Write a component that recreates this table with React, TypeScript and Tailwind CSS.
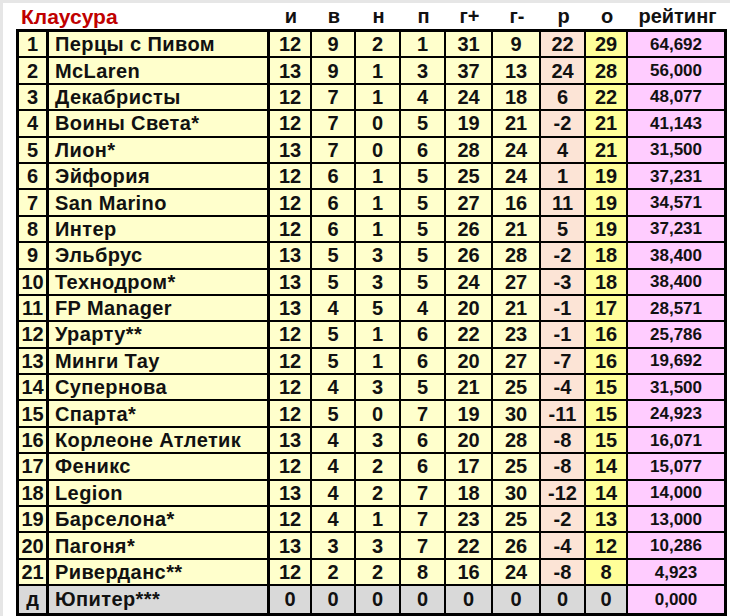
type Row = [string, string, number, number, number, number, number, number, number, number, string]

const rows: Row[] = [
  ["1", "Перцы с Пивом", 12, 9, 2, 1, 31, 9, 22, 29, "64,692"],
  ["2", "McLaren", 13, 9, 1, 3, 37, 13, 24, 28, "56,000"],
  ["3", "Декабристы", 12, 7, 1, 4, 24, 18, 6, 22, "48,077"],
  ["4", "Воины Света*", 12, 7, 0, 5, 19, 21, -2, 21, "41,143"],
  ["5", "Лион*", 13, 7, 0, 6, 28, 24, 4, 21, "31,500"],
  ["6", "Эйфория", 12, 6, 1, 5, 25, 24, 1, 19, "37,231"],
  ["7", "San Marino", 12, 6, 1, 5, 27, 16, 11, 19, "34,571"],
  ["8", "Интер", 12, 6, 1, 5, 26, 21, 5, 19, "37,231"],
  ["9", "Эльбрус", 13, 5, 3, 5, 26, 28, -2, 18, "38,400"],
  ["10", "Технодром*", 13, 5, 3, 5, 24, 27, -3, 18, "38,400"],
  ["11", "FP Manager", 13, 4, 5, 4, 20, 21, -1, 17, "28,571"],
  ["12", "Урарту**", 12, 5, 1, 6, 22, 23, -1, 16, "25,786"],
  ["13", "Минги Тау", 12, 5, 1, 6, 20, 27, -7, 16, "19,692"],
  ["14", "Супернова", 12, 4, 3, 5, 21, 25, -4, 15, "31,500"],
  ["15", "Спарта*", 12, 5, 0, 7, 19, 30, -11, 15, "24,923"],
  ["16", "Корлеоне Атлетик", 13, 4, 3, 6, 20, 28, -8, 15, "16,071"],
  ["17", "Феникс", 12, 4, 2, 6, 17, 25, -8, 14, "15,077"],
  ["18", "Legion", 13, 4, 2, 7, 18, 30, -12, 14, "14,000"],
  ["19", "Барселона*", 12, 4, 1, 7, 23, 25, -2, 13, "13,000"],
  ["20", "Пагоня*", 13, 3, 3, 7, 22, 26, -4, 12, "10,286"],
  ["21", "Риверданс**", 12, 2, 2, 8, 16, 24, -8, 8, "4,923"],
  ["д", "Юпитер***", 0, 0, 0, 0, 0, 0, 0, 0, "0,000"],
]

const heads = ["и", "в", "н", "п", "г+", "г-", "р", "о", "рейтинг"]

const gridCols = "grid grid-cols-[30px_221px_42px_44px_45px_45px_47px_48px_45px_42px_96px]"

export default function App() {
  return (
    <div className="w-[730px] h-[616px] bg-white border-t-[3px] border-l-[3px] border-[#e6e6e6] text-[#111] font-bold overflow-hidden" style={{ fontFamily: '"Liberation Sans", Arial, sans-serif' }}>
      <div className="ml-[13px] w-[711px] h-[26px] grid grid-cols-[33px_221px_42px_44px_45px_45px_47px_48px_45px_42px_99px] items-center text-[20px] leading-none">
        <div className="col-span-2 pl-[5px] text-[21px] text-[#c00000]">Клаусура</div>
        {heads.map((h) => (
          <div key={h} className="text-center">{h}</div>
        ))}
      </div>
      <div className="ml-[13px] w-[711px] border-[3px] border-black">
        {rows.map((r, i) => {
          const last = i === rows.length - 1
          const base = last ? "bg-[#d9d9d9]" : "bg-[#ffffcc]"
          return (
            <div key={r[0]} className={`${gridCols} h-[26.4px] ${last ? "" : "border-b-2 border-black"} text-[20px] leading-none`}>
              <div className={`${base} border-r-[3px] border-black flex items-center justify-center`}>{r[0]}</div>
              <div className={`${base} border-r-[3px] border-black flex items-center pl-[6px] whitespace-nowrap tracking-[0.4px]`}>{r[1]}</div>
              {[r[2], r[3], r[4], r[5], r[6], r[7]].map((v, j) => (
                <div key={j} className={`${base} border-r-2 border-black flex items-center justify-center`}>{v}</div>
              ))}
              <div className={`${last ? "bg-[#d9d9d9]" : "bg-[#fce4d6]"} border-r-2 border-black flex items-center justify-center`}>{r[8]}</div>
              <div className={`${last ? "bg-[#d9d9d9]" : "bg-[#ffff99]"} border-r-2 border-black flex items-center justify-center`}>{r[9]}</div>
              <div className="bg-[#ffccff] flex items-center justify-center text-[17px]">{r[10]}</div>
            </div>
          )
        })}
      </div>
    </div>
  )
}
